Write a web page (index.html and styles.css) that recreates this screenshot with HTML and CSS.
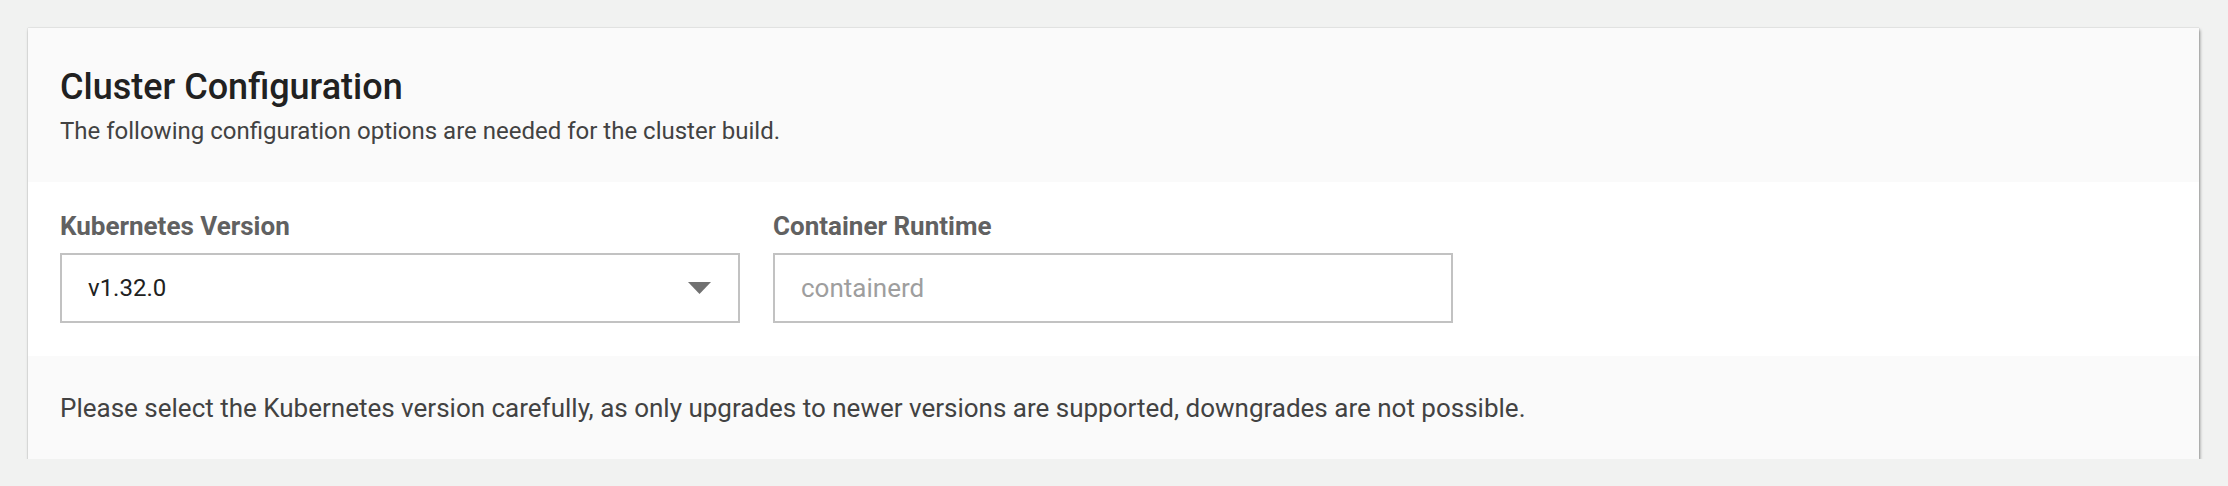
FILE: index.html
```html
<!DOCTYPE html>
<html lang="en">
<head>
  <meta charset="UTF-8">
  <meta name="viewport" content="width=device-width, initial-scale=1.0">
  <title>Cluster Configuration</title>
  <link rel="stylesheet" href="styles.css">
</head>
<body>

  <div class="card">
    <div class="card-header">
      <h1>Cluster Configuration</h1>
      <p>The following configuration options are needed for the cluster build.</p>
    </div>

    <div class="card-body">
      <div class="field">
        <label for="k8sVersion">Kubernetes Version</label>
        <div class="select-box" id="k8sVersion">
          <span>v1.32.0</span>
          <svg class="arrow" width="23" height="12" viewBox="0 0 23 12"><polygon points="0,0 23,0 11.5,12" fill="#717171"/></svg>
        </div>
      </div>

      <div class="field">
        <label for="runtime">Container Runtime</label>
        <input type="text" id="runtime" placeholder="containerd" disabled>
      </div>
    </div>

    <div class="card-footer">
      <p>Please select the Kubernetes version carefully, as only upgrades to newer versions are supported, downgrades are not possible.</p>
    </div>
  </div>

</body>
</html>
```

FILE: styles.css
```css
body, html {
  margin: 0;
  padding: 0;
  font-family: Roboto, "Liberation Sans", sans-serif;
}

body {
  background: #f1f2f1;
  padding: 28px 29px 0 28px;
}

.card {
  background: #ffffff;
  box-shadow: 1px 2px 3px rgba(0, 0, 0, 0.4), 0 0 1px rgba(0, 0, 0, 0.25);
}

.card-header {
  background: #fafafa;
  padding: 38px 32px 35px;
}

.card-header h1 {
  margin: 0 0 7px;
  font-size: 36px;
  line-height: 42px;
  font-weight: 500;
  color: #212121;
}

.card-header p {
  margin: 0;
  font-size: 24px;
  line-height: 32px;
  color: #424242;
}

.card-body {
  display: flex;
  gap: 33px;
  padding: 28px 32px 33px;
}

.field {
  display: flex;
  flex-direction: column;
  width: 680px;
}

.field label {
  font-size: 26px;
  line-height: 32px;
  font-weight: bold;
  color: #616161;
  margin-bottom: 11px;
}

.select-box, .field input {
  box-sizing: border-box;
  height: 70px;
  border: 2px solid #c2c2c2;
  background: #ffffff;
  font-family: Roboto, "Liberation Sans", sans-serif;
  font-size: 24px;
}

.select-box {
  display: flex;
  align-items: center;
  justify-content: space-between;
  padding: 0 27px 0 26px;
  color: #212121;
}

.arrow {
  display: block;
}

.field input {
  width: 100%;
  padding: 0 26px;
  margin: 0;
  font-size: 26px;
  outline: none;
}

.field input::placeholder {
  color: #9e9e9e;
}

.card-footer {
  background: #fafafa;
  padding: 34px 32px 33px;
}

.card-footer p {
  margin: 0;
  font-size: 26px;
  line-height: 36px;
  color: #424242;
}
```
